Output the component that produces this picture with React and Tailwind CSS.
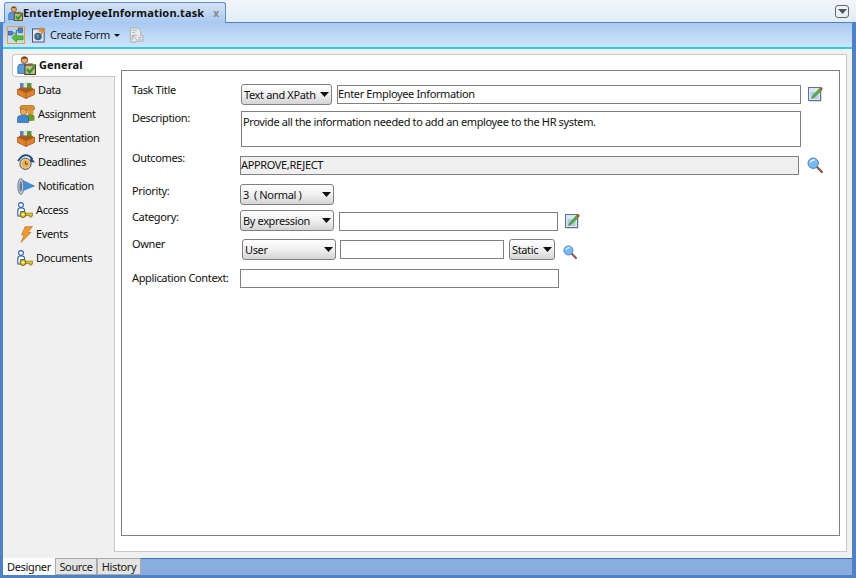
const font = { fontFamily: '"Noto Sans", "Liberation Sans", sans-serif' }

function UserCheck({ size = 18 }) {
  return (
    <svg width={size} height={size} viewBox="0 0 18 18" className="shrink-0">
      <circle cx="7" cy="3.8" r="3.2" fill="#e8a868" stroke="#7a5020" strokeWidth="0.8" />
      <path d="M4 3 Q7 -1.5 10.2 3 Q7 1.5 4 3 Z" fill="#6b3c12" />
      <path d="M0.8 16.5 V10.5 Q0.8 7.5 4.5 7.5 H8 Q10 7.5 10 9.5 V16.5 Z" fill="#5b9ad8" stroke="#2f5f9a" strokeWidth="0.7" />
      <rect x="7.5" y="8.5" width="10" height="9" fill="#c9b57f" stroke="#4a3c18" strokeWidth="1" />
      <rect x="10" y="7" width="5" height="2.4" fill="#7a6a40" />
      <path d="M9.5 12.5 L12 15.5 L16.5 10" fill="none" stroke="#1f9a2c" strokeWidth="2.1" />
    </svg>
  )
}

function BoxIcon() {
  return (
    <svg width="18" height="17" viewBox="0 0 18 17" className="shrink-0">
      <rect x="3" y="1" width="4" height="7" fill="#4f86cc" />
      <rect x="6.5" y="0.5" width="4" height="7" fill="#e2e2d0" />
      <rect x="10" y="1" width="4.5" height="7" fill="#4f9a44" />
      <path d="M1 7.5 L3 5.5 H15 L17 7.5 L9 11 Z" fill="#a85c18" />
      <path d="M0.5 7 L9 11 L17.5 7 V12.5 L9 16.5 L0.5 12.5 Z" fill="#e0822c" stroke="#9c4f14" strokeWidth="0.7" />
      <path d="M9 11 V16.5" stroke="#9c4f14" strokeWidth="0.7" />
    </svg>
  )
}

function GroupIcon() {
  return (
    <svg width="18" height="18" viewBox="0 0 18 18" className="shrink-0">
      <rect x="3" y="0.5" width="14.5" height="5" rx="2.2" fill="#d98f2e" stroke="#8a5a14" strokeWidth="0.6" />
      <circle cx="13.5" cy="7.5" r="3" fill="#d9983e" />
      <path d="M9 16.5 V11.5 Q9 9.5 12 9.5 H15 Q17.5 9.5 17.5 11.5 V15.5 Z" fill="#6a9a2a" />
      <circle cx="6.5" cy="7" r="3.2" fill="#e8a868" stroke="#8a5a14" strokeWidth="0.6" />
      <path d="M0.5 17.5 V13 Q0.5 10.5 4 10.5 H8 Q11.5 10.5 11.5 13 V17.5 Z" fill="#3f86d2" stroke="#24578f" strokeWidth="0.6" />
    </svg>
  )
}

function ClockIcon() {
  return (
    <svg width="18" height="16" viewBox="0 0 18 16" className="shrink-0">
      <path d="M1 7 Q8 -3.5 15.5 5" fill="none" stroke="#1f4f8f" strokeWidth="1.8" />
      <path d="M14 3 L18 8.5 L12.5 8 Z" fill="#1f4f8f" />
      <circle cx="8.5" cy="9.8" r="5.6" fill="#d8d0b8" stroke="#5a4a30" strokeWidth="1" />
      <circle cx="8.5" cy="9.8" r="3.6" fill="#f0b040" />
      <path d="M8.5 7.2 V10 H11" fill="none" stroke="#5a3a10" strokeWidth="0.9" />
    </svg>
  )
}

function HornIcon() {
  return (
    <svg width="18" height="17" viewBox="0 0 18 17" className="shrink-0">
      <path d="M4 1.5 L17.5 8 L4 13.5 Z" fill="#3f8fdc" stroke="#2a6aa8" strokeWidth="0.5" />
      <ellipse cx="3.8" cy="8.5" rx="3" ry="8" fill="#b8c8d8" stroke="#5a6a80" strokeWidth="0.8" />
      <ellipse cx="3.8" cy="8.5" rx="1.3" ry="5" fill="#6a7a90" />
    </svg>
  )
}

function UserKey() {
  return (
    <svg width="16" height="17" viewBox="0 0 16 17" className="shrink-0">
      <circle cx="4" cy="3" r="2.4" fill="#fff" stroke="#2f5fae" strokeWidth="1.1" />
      <path d="M0.8 14 V8.5 Q0.8 6 3.5 6 H5 Q7.5 6 7.5 8.5 V9.5 H4 V14 Z" fill="#fff" stroke="#2f5fae" strokeWidth="1.1" />
      <circle cx="6" cy="12.5" r="3" fill="#e6c820" stroke="#6a5a10" strokeWidth="0.9" />
      <circle cx="6" cy="12.5" r="0.9" fill="#fff" />
      <path d="M8.8 11.2 H16 V13.6 H14.8 V15 H12.8 V13.6 H8.8 Z" fill="#e6c820" stroke="#6a5a10" strokeWidth="0.6" />
    </svg>
  )
}

function BoltIcon() {
  return (
    <svg width="13" height="17" viewBox="0 0 13 17" className="shrink-0">
      <path d="M5 0.8 L12.5 0.5 L8 6.5 L11 6.5 L1 16.5 L4 9 L1.5 9 Z" fill="#f09a30" stroke="#b8682a" strokeWidth="0.6" />
    </svg>
  )
}

function EditIcon() {
  return (
    <svg width="15" height="16" viewBox="0 0 15 16" className="shrink-0">
      <rect x="1.5" y="2.5" width="12" height="13" fill="#b8b8b8" />
      <rect x="0.5" y="1.5" width="12" height="13" fill="#dbe6f2" stroke="#5f7390" strokeWidth="1" />
      <rect x="2.5" y="6" width="8" height="7" fill="#b8cce0" />
      <path d="M3.5 12.5 L5 9.5 L11.5 2.5 L13.5 4.5 L6.5 11 Z" fill="#55b23a" stroke="#2f7a20" strokeWidth="0.5" />
      <path d="M11.5 2.5 L13 0.8 L14.8 2.8 L13.5 4.5 Z" fill="#d83a30" />
    </svg>
  )
}

function Magnifier({ size = 16 }) {
  return (
    <svg width={size} height={size} viewBox="0 0 16 16" className="shrink-0">
      <path d="M10 10 L14.8 14.8" stroke="#8a5a4a" strokeWidth="2.4" strokeLinecap="round" />
      <circle cx="6.2" cy="6.2" r="5.2" fill="#7ab8f4" stroke="#4a7fbe" strokeWidth="1" />
      <path d="M3 5.5 Q4.5 2.5 8 3" fill="none" stroke="#e4f2ff" strokeWidth="1.4" />
    </svg>
  )
}

function Caret({ className = 'w-[9px] h-[5px]', fill = '#111' }) {
  return (
    <svg viewBox="0 0 10 6" preserveAspectRatio="none" className={`shrink-0 ${className}`}>
      <path d="M0 0 H10 L5 6 Z" fill={fill} />
    </svg>
  )
}

function Select({ label, className }) {
  return (
    <div className={`flex items-center justify-between h-[21px] pl-[2px] pr-[2px] border border-[#808080] rounded-[3px] bg-gradient-to-b from-white via-[#f0f0f0] to-[#d4d4d4] text-[#111] shrink-0 ${className}`}>
      <span className="whitespace-pre pt-[1px]">{label}</span>
      <Caret />
    </div>
  )
}

function Input({ value, className }) {
  return (
    <div className={`h-[19px] flex items-center border border-[#808080] text-[#111] shrink-0 whitespace-pre ${className}`}>{value}</div>
  )
}

function Label({ children, className }) {
  return <div className={`w-[108px] shrink-0 text-[#111] leading-[14px] whitespace-nowrap ${className}`}>{children}</div>
}

const navItems = [
  { label: 'Data', Icon: BoxIcon, gap: 'pl-[14px] gap-[3px]' },
  { label: 'Assignment', Icon: GroupIcon, gap: 'pl-[14px] gap-[3px]' },
  { label: 'Presentation', Icon: BoxIcon, gap: 'pl-[14px] gap-[3px]' },
  { label: 'Deadlines', Icon: ClockIcon, gap: 'pl-[14px] gap-[3px]' },
  { label: 'Notification', Icon: HornIcon, gap: 'pl-[14px] gap-[3px]' },
  { label: 'Access', Icon: UserKey, gap: 'pl-[14px] gap-[3px]' },
  { label: 'Events', Icon: BoltIcon, gap: 'pl-[17px] gap-[3px]' },
  { label: 'Documents', Icon: UserKey, gap: 'pl-[14px] gap-[3px]' },
]

export default function App() {
  return (
    <div className="w-[856px] h-[578px] flex flex-col overflow-hidden bg-[#4f81c7] text-[11px] tracking-[-0.36px]" style={font}>
      {/* editor tab strip */}
      <div className="h-[23px] flex shrink-0 bg-gradient-to-b from-[#f2f6fa] to-[#e2edf6] border-b border-[#4f81c7] pl-[4px] pt-[2px]">
        <div className="w-[222px] h-[21px] flex items-center pl-[3px] bg-gradient-to-b from-[#d4e2f4] to-[#a9c9f2] border border-b-0 border-[#5f8fd0] rounded-t-[3px]">
          <UserCheck size={15} />
          <span className="font-bold text-[#111] tracking-[0.17px]">EnterEmployeeInformation.task</span>
          <span className="ml-[9px] font-bold text-[#888] text-[10px]">x</span>
        </div>
        <div className="ml-auto mr-[7px] mt-[3px] w-[14px] h-[13px] flex items-center justify-center border border-[#666] rounded-[3px]">
          <Caret className="w-[9px] h-[5px]" fill="#555" />
        </div>
      </div>
      {/* toolbar */}
      <div className="h-[26px] flex items-center shrink-0 ml-[3px] mr-[4px] pl-[4px] bg-gradient-to-b from-[#a9c9f2] to-[#cfe6fa] border-b-2 border-[#34c8f0]">
        <div className="w-[18px] h-[18px] flex items-center justify-center border border-[#e8a030]">
          <svg width="16" height="16" viewBox="0 0 17 16">
            <rect x="0.5" y="4" width="4" height="4" fill="#4a80c8" stroke="#1f4f8f" strokeWidth="0.6" />
            <rect x="11" y="0.5" width="4.5" height="5" fill="#4a80c8" stroke="#1f4f8f" strokeWidth="0.6" />
            <path d="M4.5 6 H9 V3 H11" fill="none" stroke="#333" strokeWidth="0.7" />
            <path d="M4 11 L9 6.5 V9 H16 V13 H9 V15.5 Z" fill="#58c030" stroke="#2f8a18" strokeWidth="0.7" />
          </svg>
        </div>
        <svg width="14" height="16" viewBox="0 0 15 16" className="ml-[7px]">
          <rect x="0.5" y="1.5" width="12.5" height="14" fill="#e4e6ee" stroke="#404a68" strokeWidth="1" />
          <circle cx="6.5" cy="9.5" r="4" fill="#3a5fa0" />
          <path d="M4.5 8 L7 7 L8 10 L6 12 Z" fill="#6aa050" />
          <path d="M10.5 0 V7 M7 3.5 H14" stroke="#e88a20" strokeWidth="2" />
        </svg>
        <span className="ml-[4px] text-[#1a1a2a]">Create Form</span>
        <Caret className="ml-[4px] w-[6px] h-[3px]" />
        <svg width="15" height="16" viewBox="0 0 15 17" className="ml-[9px]">
          <path d="M1 1 H9 L12 4 V9 H14.5 V15 H7 V16 H1 Z" fill="#e6e8ea" stroke="#a8acb0" strokeWidth="1" />
          <path d="M3 3.5 H8 M3 6 H6 M9 11 H13 M9 13 H13" stroke="#b0b4b8" strokeWidth="1" />
          <path d="M3 9 L8 14 M3 14 V9 H8" fill="none" stroke="#a8acb0" strokeWidth="1" />
        </svg>
      </div>
      {/* body */}
      <div className="flex-1 min-h-0 flex ml-[3px] mr-[4px] bg-[#f0f0f0] pt-[5px]">
        <div className="w-[112px] shrink-0 relative z-10">
          <div className="ml-[9px] h-[23px] w-[104px] flex items-center gap-[3px] pl-[4px] bg-white border border-r-0 border-[#c8c8c8] rounded-l-[4px]">
            <UserCheck size={19} />
            <span className="font-bold text-[#111] tracking-[0.1px]">General</span>
          </div>
          <div className="pt-[1px]">
            {navItems.map(({ label, Icon, gap }) => (
              <div key={label} className={`h-[24px] flex items-center text-[#111] ${gap}`}>
                <Icon />
                <span>{label}</span>
              </div>
            ))}
          </div>
        </div>
        <div className="w-[733px] h-[498px] shrink-0 -ml-px bg-white border border-[#c8c8c8] pl-[6px] pt-[15px]">
          <div className="w-[719px] h-[466px] border border-[#808080] pl-[10px] pt-[12px]">
            <div className="flex items-start h-[28px]">
              <Label>Task Title</Label>
              <Select label="Text and XPath" className="w-[91px] ml-[1px] mt-[1px]" />
              <Input value="Enter Employee Information" className="ml-[5px] w-[464px] mt-[2px]" />
              <div className="ml-[7px] mt-[3px]"><EditIcon /></div>
            </div>
            <div className="flex items-start h-[40px]">
              <Label>Description:</Label>
              <div className="w-[560px] h-[36px] ml-[1px] pl-[1px] pt-[2px] border border-[#808080] text-[#111]">Provide all the information needed to add an employee to the HR system.</div>
            </div>
            <div className="flex items-start h-[33px]">
              <Label>Outcomes:</Label>
              <Input value="APPROVE,REJECT" className="w-[559px] mt-[5px] bg-[#f0f0f0]" />
              <div className="ml-[8px] mt-[6px]"><Magnifier /></div>
            </div>
            <div className="flex items-start h-[26px]">
              <Label>Priority:</Label>
              <Select label="3  ( Normal )" className="w-[94px]" />
            </div>
            <div className="flex items-start h-[27px]">
              <Label>Category:</Label>
              <Select label="By expression" className="w-[94px]" />
              <Input className="ml-[5px] w-[219px] mt-[2px]" />
              <div className="ml-[7px] mt-[3px]"><EditIcon /></div>
            </div>
            <div className="flex items-start h-[32px]">
              <Label>Owner</Label>
              <Select label="User" className="w-[94px] ml-[2px] mt-[2px]" />
              <Input className="ml-[4px] w-[164px] mt-[3px]" />
              <Select label="Static" className="w-[46px] ml-[5px] mt-[2px]" />
              <div className="ml-[8px] mt-[8px]"><Magnifier size={14} /></div>
            </div>
            <div className="flex items-start">
              <Label className="mt-[2px]">Application Context:</Label>
              <Input className="w-[319px]" />
            </div>
          </div>
        </div>
      </div>
      {/* bottom tabs */}
      <div className="h-[17px] flex shrink-0 ml-[3px] mr-[4px] mb-[3px] bg-[#8aaedb]">
        <div className="w-[52px] pt-[1px] flex items-center justify-center bg-white text-[#111]">Designer</div>
        <div className="w-[42px] pt-[1px] flex items-center justify-center bg-[#e4e4e4] border border-[#aaa] text-[#222]">Source</div>
        <div className="w-[44px] pt-[1px] flex items-center justify-center bg-[#e4e4e4] border border-[#aaa] text-[#222]">History</div>
        <div className="flex-1 border-t border-[#3a70c8]" />
      </div>
    </div>
  )
}
